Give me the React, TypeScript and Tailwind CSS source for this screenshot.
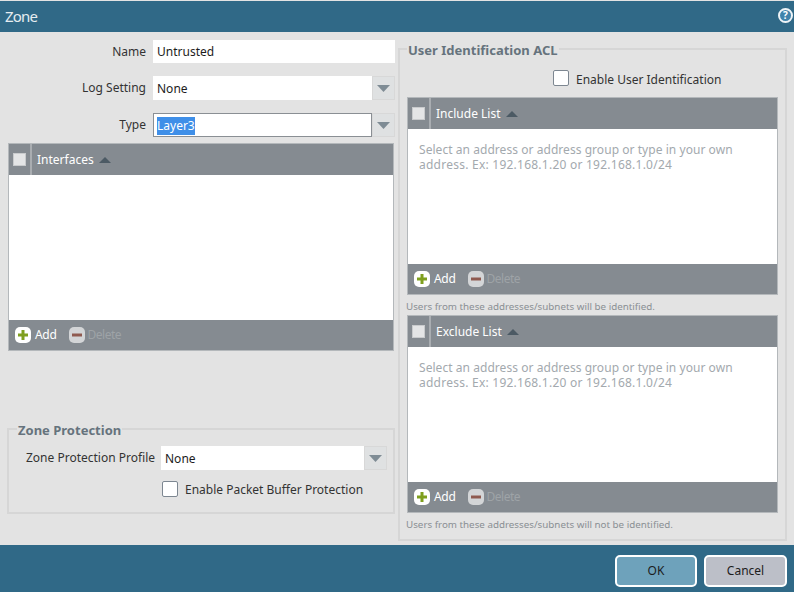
const FONT = "font-['Noto_Sans','DejaVu_Sans',sans-serif]";

function Caret({ className }: { className: string }) {
	return (
		<svg width="13" height="7" viewBox="0 0 13 7" className={className}>
			<path d="M0 0H13L6.5 7Z" fill="currentColor" />
		</svg>
	);
}

function SortArrow() {
	return (
		<svg width="12" height="6" viewBox="0 0 12 6" className="text-[#4c5a64]">
			<path d="M0 6L6 0L12 6Z" fill="currentColor" />
		</svg>
	);
}

function Checkbox() {
	return <span className="block w-[16px] h-[16px] rounded-[2px] bg-white border border-[#7d8791]" />;
}

function Select({ value, focused }: { value: string; focused?: boolean }) {
	return (
		<div className="flex flex-1 h-[24px]">
			<div
				className={
					focused
						? "flex flex-1 items-center pl-[3px] pt-[1px] bg-white border border-[#8a8f94] text-[12px] text-[#1c1c1c]"
						: "flex flex-1 items-center pl-[4px] pt-[1px] bg-white text-[12px] text-[#1c1c1c]"
				}
			>
				{focused ? <span className="bg-[#3f8fe8] text-white">{value}</span> : value}
			</div>
			<div className="flex w-[23px] items-center justify-center bg-[#dfe1e2] border border-[#d8d8d8]">
				<Caret className="text-[#7f8c95]" />
			</div>
		</div>
	);
}

function FormRow({ label, children, className }: { label: string; children: React.ReactNode; className: string }) {
	return (
		<div className={`flex items-center ${className}`}>
			<span className="w-[146px] text-right text-[12px] text-[#333]">{label}</span>
			<div className="flex flex-1 ml-[7px]">{children}</div>
		</div>
	);
}

function AddDelete() {
	return (
		<div className="flex items-center h-[31px] pl-[6px] bg-[#858b91] border-b border-[#b4b8bb] shrink-0">
			<span className="flex items-center justify-center w-[16px] h-[16px] rounded-[5px] bg-white">
				<svg width="12" height="12" viewBox="0 0 12 12">
					<path d="M6 1V11M1 6H11" stroke="#7f9f1f" strokeWidth="3" />
				</svg>
			</span>
			<span className="ml-[4px] text-[12px] tracking-[-0.3px] text-white">Add</span>
			<span className="flex items-center justify-center ml-[12px] w-[16px] h-[16px] rounded-[5px] bg-[#d3d5d7]">
				<svg width="10" height="4" viewBox="0 0 10 4">
					<path d="M0 2H10" stroke="#8f5a50" strokeWidth="3" />
				</svg>
			</span>
			<span className="ml-[3px] text-[12px] tracking-[-0.5px] text-[#9ea3a7]">Delete</span>
		</div>
	);
}

function ListTable({ title, hint, className }: { title: string; hint?: boolean; className: string }) {
	return (
		<div className={`flex flex-col border-x border-[#b4b8bb] ${className}`}>
			<div className="flex items-center h-[32px] bg-[#858b91] border-t border-[#b4b8bb] shrink-0">
				<div className="flex items-center justify-center w-[23px] h-full border-r-2 border-[#a9adb1]">
					<span className="block w-[13px] h-[13px] bg-[#e4e5e6] border border-[#c9cbcd]" />
				</div>
				<span className="ml-[5px] mr-[5px] text-[12px] text-white">{title}</span>
				<SortArrow />
			</div>
			<div className="flex-1 bg-white px-[11px] pt-[13px] text-[12px] leading-[15px] text-[#a3a9ae]">
				{hint && (
					<>
						<span className="block whitespace-nowrap tracking-[0.05px]">Select an address or address group or type in your own</span>
						<span className="block whitespace-nowrap tracking-[0.24px]">address. Ex: 192.168.1.20 or 192.168.1.0/24</span>
					</>
				)}
			</div>
			<AddDelete />
		</div>
	);
}

export default function App() {
	return (
		<div className={`flex flex-col w-[794px] h-[592px] overflow-hidden bg-[#e3e3e3] ${FONT}`}>
			{/* title bar */}
			<div className="flex items-center justify-between h-[31px] mt-[1px] pl-[5px] pr-[1px] bg-[#306987] shrink-0">
				<span className="text-[15px] text-[#e6edf1] tracking-[-0.8px]">Zone</span>
				<span className="flex items-center justify-center w-[15px] h-[15px] mb-[3px] rounded-full bg-[#3f83ab] border-2 border-[#eef3f6] text-[10px] font-bold leading-none text-white">
					?
				</span>
			</div>

			<div className="flex flex-1 min-h-0">
				{/* left column */}
				<div className="flex flex-col w-[398px] shrink-0 pl-[7px] pr-[3px]">
					<FormRow label="Name" className="mt-[8px] -ml-[7px]">
						<div className="flex flex-1 items-center h-[23px] pl-[4px] pt-[1px] bg-white text-[12px] text-[#1c1c1c]">Untrusted</div>
					</FormRow>
					<FormRow label="Log Setting" className="mt-[13px] -ml-[7px]">
						<Select value="None" />
					</FormRow>
					<FormRow label="Type" className="mt-[13px] -ml-[7px]">
						<Select value="Layer3" focused />
					</FormRow>
					<ListTable title="Interfaces" className="h-[208px] mt-[6px] ml-[1px] mr-[1px]" />

					<fieldset className="h-[95px] mt-[68px] px-[6px] border-2 border-[#d6d6d6]">
						<legend className="ml-[2px] px-[1px] pt-[4px] text-[13px] leading-[15px] font-bold text-[#66737d]">Zone Protection</legend>
						<div className="flex items-center mt-[8px]">
							<span className="w-[146px] pl-[11px] whitespace-nowrap text-[12px] text-[#333]">Zone Protection Profile</span>
							<Select value="None" />
						</div>
						<div className="flex items-center mt-[8px] ml-[147px]">
							<Checkbox />
							<span className="ml-[7px] mt-[3px] text-[12px] text-[#333]">Enable Packet Buffer Protection</span>
						</div>
					</fieldset>
				</div>

				{/* right column */}
				<fieldset className="w-[389px] h-[502px] mt-[7px] px-[7px] border-2 border-[#d6d6d6] shrink-0">
					<legend className="px-[1px] pt-[4px] text-[13px] leading-[15px] font-bold text-[#66737d]">User Identification ACL</legend>
					<div className="flex items-center mt-[12px] ml-[146px] h-[16px]">
						<Checkbox />
						<span className="ml-[7px] mt-[3px] text-[12px] text-[#333]">Enable User Identification</span>
					</div>
					<ListTable title="Include List" hint className="h-[198px] mt-[11px]" />
					<p className="h-[20px] pt-[4px] -ml-[1px] text-[9.8px] leading-[16px] text-[#8a8f94]">Users from these addresses/subnets will be identified.</p>
					<ListTable title="Exclude List" hint className="h-[198px]" />
					<p className="pt-[4px] -ml-[1px] text-[9.8px] leading-[16px] text-[#8a8f94]">Users from these addresses/subnets will not be identified.</p>
				</fieldset>
			</div>

			{/* footer */}
			<div className="flex items-start justify-end gap-[7px] h-[47px] pt-[10px] pr-[7px] bg-[#306987] shrink-0">
				<button className="w-[82px] h-[32px] rounded-[5px] bg-[#6ea2bb] border-2 border-white text-[12px] text-[#1c1c1c]">OK</button>
				<button className="w-[83px] h-[32px] rounded-[5px] bg-[#bcbfc8] border-2 border-white text-[12px] text-[#1c1c1c]">Cancel</button>
			</div>
		</div>
	);
}
